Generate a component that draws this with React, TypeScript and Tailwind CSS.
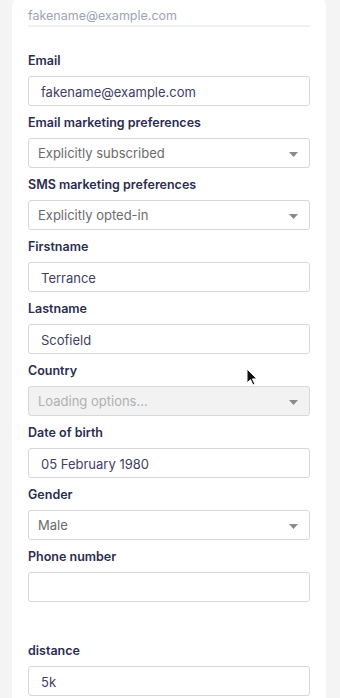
import { ReactNode } from "react";

type TField = {
  label: string;
  value: string;
  kind: "input" | "select";
  disabled?: boolean;
};

const fields: TField[] = [
  { label: "Email", value: "fakename@example.com", kind: "input" },
  { label: "Email marketing preferences", value: "Explicitly subscribed", kind: "select" },
  { label: "SMS marketing preferences", value: "Explicitly opted-in", kind: "select" },
  { label: "Firstname", value: "Terrance", kind: "input" },
  { label: "Lastname", value: "Scofield", kind: "input" },
  { label: "Country", value: "Loading options...", kind: "select", disabled: true },
  { label: "Date of birth", value: "05 February 1980", kind: "input" },
  { label: "Gender", value: "Male", kind: "select" },
  { label: "Phone number", value: "", kind: "input" },
];

const Field = ({ label, children }: { label: string; children: ReactNode }) => (
  <div className="flex flex-col">
    <label className="h-4 text-[12.5px] leading-4 font-semibold text-[#2b2d50]">
      {label}
    </label>
    <div className="mt-[7px] mb-[9px]">{children}</div>
  </div>
);

const Caret = () => (
  <svg width="9" height="5" viewBox="0 0 9 5" className="absolute right-[11px] top-[13px]">
    <path d="M0 0h9L4.5 5z" fill="#8a8a8a" />
  </svg>
);

const Box = ({ field }: { field: TField }) => {
  if (field.kind === "select") {
    return (
      <div
        className={`relative h-[30px] rounded-[3px] border border-[#d8d8d8] pl-[9px] pt-[2px] flex items-center text-[13px] ${
          field.disabled ? "bg-[#f2f2f2] text-[#b0b0b0]" : "bg-white text-[#6b6b6b]"
        }`}
      >
        {field.value}
        <Caret />
      </div>
    );
  }
  return (
    <div className="h-[30px] rounded-[3px] border border-[#d8d8d8] bg-white pl-[12px] pt-[3px] flex items-center text-[13px] text-[#3f4163]">
      {field.value}
    </div>
  );
};

const App = () => {
  return (
    <div
      className="min-h-[698px] w-[340px] bg-[#f4f4f4] pl-3 pr-[14px] overflow-hidden relative"
      style={{ fontFamily: "Inter, 'Noto Sans', sans-serif" }}
    >
      <div className="-mt-2 rounded-2xl bg-white px-4 pt-[16px] pb-6">
        <div className="text-[12.5px] leading-4 text-[#9aa5b5]">fakename@example.com</div>
        <div className="mt-[1px] h-[2px] bg-[#f0f1f3]" />
        <div className="mt-[26px]">
          {fields.map((f) => (
            <Field key={f.label} label={f.label}>
              <Box field={f} />
            </Field>
          ))}
          <div className="h-8" />
          <Field label="distance">
            <Box field={{ label: "distance", value: "5k", kind: "input" }} />
          </Field>
        </div>
      </div>
      <svg
        width="12"
        height="18"
        viewBox="0 0 12 18"
        className="absolute left-[246px] top-[368px]"
      >
        <path d="M1 1v14l3.5-3.3 2.4 5.3 2-0.9-2.4-5.2H11z" fill="#111" stroke="#fff" strokeWidth="1" />
      </svg>
    </div>
  );
};

export default App;
